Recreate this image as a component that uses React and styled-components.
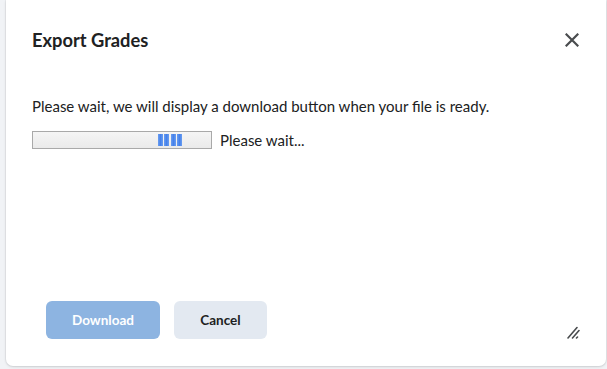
import React from 'react'
import styled, { createGlobalStyle } from 'styled-components'

const GlobalStyle = createGlobalStyle`
  html, body {
    margin: 0;
    padding: 0;
    background: #f1f3f6;
  }
  body {
    font-family: Lato, "Open Sans", "Liberation Sans", sans-serif;
    color: #202122;
  }
`

const Backdrop = styled.div`
  box-sizing: border-box;
  height: 369px;
  width: 607px;
  padding: 0 1px 3px 6px;
  overflow: hidden;
`

const Dialog = styled.div`
  position: relative;
  box-sizing: border-box;
  height: 100%;
  background: #ffffff;
  border-radius: 0 0 7px 7px;
  box-shadow: 0 1px 3px rgba(0, 0, 0, 0.12), 0 0 0 1px rgba(0, 0, 0, 0.04);
  display: flex;
  flex-direction: column;
  padding: 27px 22px 27px 26px;
`

const Header = styled.div`
  display: flex;
  align-items: center;
  justify-content: space-between;
`

const Title = styled.h2`
  margin: 0;
  font-size: 18.3px;
  line-height: 24px;
  font-weight: 700;
  color: #202122;
`

const CloseButton = styled.button`
  border: 0;
  background: none;
  padding: 0;
  width: 24px;
  height: 24px;
  display: flex;
  align-items: center;
  justify-content: center;
  cursor: pointer;
  margin-top: 1px;
`

const Message = styled.p`
  margin: 42px 0 0;
  font-size: 15px;
  line-height: 24px;
`

const ProgressRow = styled.div`
  display: flex;
  align-items: center;
  gap: 8px;
  margin-top: 13px;
  font-size: 15px;
`

const Track = styled.div`
  box-sizing: border-box;
  width: 180px;
  height: 18px;
  border: 1px solid #a9a9a9;
  background: linear-gradient(#f5f5f5, #eaeaea);
  display: flex;
  align-items: center;
  padding-left: 125px;
  gap: 1.3px;
`

const Segment = styled.span`
  width: 5px;
  height: 12px;
  background: linear-gradient(90deg, #6a9df0, #4581ea 50%, #6a9df0);
`

const Footer = styled.div`
  margin-top: auto;
  display: flex;
  gap: 14px;
  padding-left: 14px;
`

const Button = styled.button`
  box-sizing: border-box;
  height: 38px;
  min-width: ${props => props.$wide ? '114px' : '93px'};
  border: 0;
  border-radius: 6px;
  font-family: inherit;
  font-size: 13.5px;
  font-weight: 700;
  padding: 0 20px;
  background: ${props => props.$primary ? '#8db4e1' : '#e3e9f1'};
  color: ${props => props.$primary ? '#ffffff' : '#202122'};
  cursor: ${props => props.disabled ? 'default' : 'pointer'};
`

const Grip = styled.svg`
  position: absolute;
  right: 26px;
  bottom: 27px;
`

const Segments = () => (
  <>
    {[0, 1, 2, 3].map(i => <Segment key={i} />)}
  </>
)

export default function App () {
  return (
    <>
      <GlobalStyle />
      <Backdrop>
        <Dialog>
          <Header>
            <Title>Export Grades</Title>
            <CloseButton aria-label='Close'>
              <svg width='14' height='14' viewBox='0 0 14 14'>
                <path d='M1.5 1.5 L12.5 12.5 M12.5 1.5 L1.5 12.5' stroke='#494c4e' strokeWidth='2.2' strokeLinecap='square' />
              </svg>
            </CloseButton>
          </Header>
          <Message>Please wait, we will display a download button when your file is ready.</Message>
          <ProgressRow>
            <Track><Segments /></Track>
            <span>Please wait...</span>
          </ProgressRow>
          <Footer>
            <Button $primary $wide disabled>Download</Button>
            <Button>Cancel</Button>
          </Footer>
          <Grip width='13' height='13' viewBox='0 0 13 13'>
            <path d='M1 12 L10 1.5 M5.5 12 L12 4.5' stroke='#494c4e' strokeWidth='1.6' strokeLinecap='round' />
            <path d='M9.5 12 L10.5 11' stroke='#494c4e' strokeWidth='1.6' strokeLinecap='round' />
          </Grip>
        </Dialog>
      </Backdrop>
    </>
  )
}
